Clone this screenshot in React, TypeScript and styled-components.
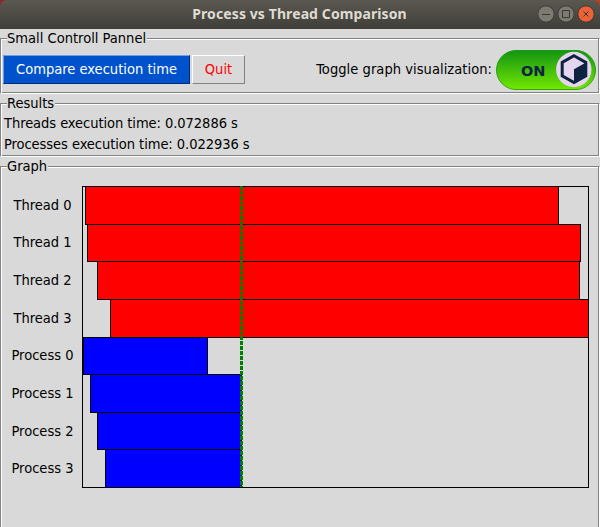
import React from "react";
import styled, { createGlobalStyle } from "styled-components";

const GlobalStyle = createGlobalStyle`
  * { box-sizing: border-box; }
  body {
    margin: 0;
    background: #d9d9d9;
    overflow: hidden;
    color: #000;
    font: 14.55px/20px "DejaVu Sans Condensed", "DejaVu Sans", sans-serif;
    font-stretch: condensed;
  }
`;

const Window = styled.main`
  width: 600px;
  height: 527px;
  display: flex;
  flex-direction: column;
  background: #d9d9d9;
  white-space: nowrap;
  overflow: hidden;
`;

const TitleFrame = styled.div`
  flex: none;
  height: 29px;
  background: linear-gradient(90deg, #8e2430 50%, #c43b25 50%);
`;

const TitleBar = styled.header`
  height: 29px;
  border-radius: 7px 7px 0 0;
  background: linear-gradient(#5b5850, #3f3e39);
  display: grid;
  grid-template-columns: 62px 1fr 62px;
  align-items: center;
`;

const Title = styled.h1`
  grid-column: 2;
  margin: 0 0 1px;
  padding-right: 1px;
  text-align: center;
  color: #dfdbd2;
  font: bold 14px/20px "Noto Sans", sans-serif;
  letter-spacing: 0.1px;
`;

const WindowButtons = styled.svg`
  display: block;
  width: 62px;
  height: 29px;
`;

const Group = styled.section<{ $height: number }>`
  flex: none;
  height: ${(p) => p.$height}px;
  display: grid;
  grid-template-rows: 18px 1fr;
`;

const Caption = styled.h2`
  display: flex;
  height: 18px;
  margin: 0;
  font: inherit;
  font-stretch: condensed;
  line-height: 18px;
  &::before {
    content: "";
    width: 6px;
    margin-top: 9px;
    border-top: 1px solid #828282;
    border-left: 1px solid #828282;
    box-shadow: inset 1px 1px #fff;
  }
  &::after {
    content: "";
    flex: 1;
    margin: 9px 0 0 1px;
    border-top: 1px solid #828282;
    border-right: 1px solid #fff;
    box-shadow: inset -1px 0 #828282, inset 0 1px #fff;
  }
`;

const Body = styled.div<{ $open?: boolean }>`
  border-left: 1px solid #828282;
  border-right: 1px solid #fff;
  border-bottom: ${(p) => (p.$open ? "0" : "1px solid #fff")};
  box-shadow: inset 1px 0 #fff, inset -1px 0 #828282
    ${(p) => (p.$open ? "" : ", inset 0 -1px #828282")};
`;

const ControlRow = styled(Body)`
  display: flex;
  align-items: flex-start;
  padding: 3px 3px 0 2px;
`;

const Button = styled.button<{ $primary?: boolean; $width: number }>`
  width: ${(p) => p.$width}px;
  height: 29px;
  margin: 5px 2px 0 0;
  padding: 0 0 1px;
  border: 1px solid;
  border-color: ${(p) =>
    p.$primary ? "#6b9de8 #002c78 #002c78 #6b9de8" : "#fff #828282 #828282 #fff"};
  background: ${(p) => (p.$primary ? "#0052cc" : "#d9d9d9")};
  color: ${(p) => (p.$primary ? "#fff" : "#f00")};
  font: inherit;
  font-stretch: condensed;
`;

const ToggleLabel = styled.span`
  margin: 9px 4px 0 auto;
  letter-spacing: 0.04px;
`;

const Toggle = styled.svg`
  width: 100px;
  height: 40px;
  flex: none;
`;

const Results = styled(Body)`
  padding: 0 0 0 3px;
  line-height: 21px;
  letter-spacing: -0.07px;
`;

const Graph = styled(Body)`
  display: grid;
  grid-template-columns: 81px 1fr;
  align-items: start;
  padding-top: 11px;
`;

const Labels = styled.div`
  display: grid;
  grid-template-rows: 37px 38px 38px 37px 38px 38px 37px 38px;
  text-align: center;
  padding: 9px 0 0 2px;
`;

const Plot = styled.svg`
  display: block;
  width: 507px;
  height: 302px;
`;

const rows = [
  { name: "Thread 0", start: 3, end: 476, color: "#f00" },
  { name: "Thread 1", start: 5, end: 498, color: "#f00" },
  { name: "Thread 2", start: 15, end: 497, color: "#f00" },
  { name: "Thread 3", start: 28, end: 506, color: "#f00" },
  { name: "Process 0", start: 1, end: 125, color: "#00f" },
  { name: "Process 1", start: 8, end: 159, color: "#00f" },
  { name: "Process 2", start: 15, end: 159, color: "#00f" },
  { name: "Process 3", start: 23, end: 159, color: "#00f" },
];
const edges = [0, 38, 75, 113, 151, 188, 226, 263, 301];

export default function App() {
  return (
    <Window>
      <GlobalStyle />
      <TitleFrame>
        <TitleBar>
          <Title>Process vs Thread Comparison</Title>
          <WindowButtons viewBox="538 0 62 29">
            <g stroke="#3a3935">
              <circle cx="546" cy="14" r="8.2" fill="#7d7a72" />
              <circle cx="566" cy="14" r="8.2" fill="#7d7a72" />
              <circle cx="586" cy="14" r="8.2" fill="#ee6238" />
            </g>
            <g fill="none" stroke="#393833">
              <path d="M542 14.5h8M562.5 10.5h7v7h-7zM583.5 11.5l5 5m0-5l-5 5" />
            </g>
          </WindowButtons>
        </TitleBar>
      </TitleFrame>

      <Group $height={65}>
        <Caption>Small Controll Pannel</Caption>
        <ControlRow>
          <Button $primary $width={187}>Compare execution time</Button>
          <Button $width={53}>Quit</Button>
          <ToggleLabel>Toggle graph visualization:</ToggleLabel>
          <Toggle viewBox="0 0 100 40" role="switch" aria-checked="true">
            <defs>
              <linearGradient id="green" x2="0" y2="1">
                <stop stopColor="#149414" />
                <stop offset="1" stopColor="#72e800" />
              </linearGradient>
              <linearGradient id="rim" x2="0" y2="1">
                <stop stopColor="#159c12" />
                <stop offset="1" stopColor="#36a80a" />
              </linearGradient>
            </defs>
            <rect x=".5" y=".5" width="99" height="39" rx="19.5" fill="url(#green)" stroke="url(#rim)" />
            <text x="25" y="26" fontFamily="DejaVu Sans" fontSize="14.5" fontWeight="bold" fontStretch="normal" fill="#0d2440">ON</text>
            <circle cx="77.8" cy="19.5" r="17.7" fill="#e6d5ef" />
            <path d="M78 5.7L89.8 12.4V25.8L78 32.5L66.2 25.8V12.4Z" fill="none" stroke="#0d2440" strokeWidth="3" />
            <path d="M78 19.2L90 12.5V26L78 33Z" fill="#0d2440" />
          </Toggle>
        </ControlRow>
      </Group>

      <Group $height={63}>
        <Caption>Results</Caption>
        <Results>
          <div>Threads execution time: 0.072886 s</div>
          <div>Processes execution time: 0.022936 s</div>
        </Results>
      </Group>

      <Group $height={370}>
        <Caption>Graph</Caption>
        <Graph $open>
          <Labels>
            {rows.map((row) => <span key={row.name}>{row.name}</span>)}
          </Labels>
          <Plot viewBox="0 0 507 302" shapeRendering="crispEdges">
            <rect x=".5" y=".5" width="506" height="301" fill="none" stroke="#000" />
            {rows.map((row, i) => (
              <rect
                key={row.name}
                x={row.start + 0.5}
                y={edges[i] + 0.5}
                width={row.end - row.start}
                height={edges[i + 1] - edges[i]}
                fill={row.color}
                stroke="#000"
              />
            ))}
            <path d="M159.5 0V301" stroke="#008000" strokeWidth="3" strokeDasharray="4 1" />
          </Plot>
        </Graph>
      </Group>
    </Window>
  );
}
